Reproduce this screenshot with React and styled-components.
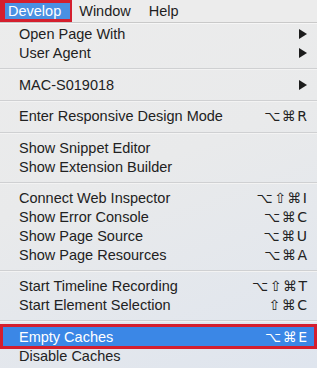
import styled, { createGlobalStyle } from "styled-components";

const Global = createGlobalStyle`
  html, body {
    margin: 0;
    padding: 0;
    background: #e6e7e9;
  }
  body {
    font-family: "Liberation Sans", Arial, sans-serif;
    -webkit-font-smoothing: antialiased;
  }
`;

const Screen = styled.div`
  width: 317px;
  height: 368px;
  overflow: hidden;
  display: flex;
  flex-direction: column;
  background: linear-gradient(160deg, #ececec 0%, #e9eaeb 45%, #dfe5ee 100%);
`;

const MenuBar = styled.div`
  height: 22px;
  display: flex;
  align-items: stretch;
  background: #ececec;
  border-bottom: 1px solid #c9c9c9;
  box-shadow: 0 1px 0 #f6f6f6;
`;

const Title = styled.div`
  display: flex;
  align-items: center;
  font-size: 14.5px;
  color: ${(p) => (p.$active ? "#fff" : "#1e1e1e")};
  padding: ${(p) => (p.$active ? "0 9px 0 3px" : "0 9px 0 9px")};
  background: ${(p) => (p.$active ? "#4a90e2" : "transparent")};
  border: ${(p) => (p.$active ? "3px solid #d41f2e" : "none")};
  border-left-width: ${(p) => (p.$active ? "5px" : "0")};
  border-right-width: ${(p) => (p.$active ? "2px" : "0")};
  margin-right: ${(p) => (p.$active ? "-2px" : "0")};
`;

const Menu = styled.div`
  flex: 1;
  display: flex;
  flex-direction: column;
  padding-top: 2px;
`;

const Row = styled.div`
  height: 18.7px;
  display: flex;
  align-items: center;
  justify-content: space-between;
  padding: 0 10px 0 19px;
  font-size: 14.5px;
  color: #222;

  &[data-active="true"] {
    height: 19px;
    color: #fff;
    background: #3b87e6;
    box-shadow: 0 0 0 3px #d41f2e;
    margin: 0 3px;
    padding: 0 7px 0 16px;
  }
`;

const Keys = styled.span`
  font-family: "DejaVu Sans", "Liberation Sans", sans-serif;
  font-size: 14px;
  letter-spacing: 1.5px;
  margin-right: -1.5px;
`;

const Sep = styled.div`
  height: 13px;
  display: flex;
  align-items: center;
  &::after {
    content: "";
    flex: 1;
    height: 1px;
    background: #cfd0d2;
    box-shadow: 0 1px 0 #f3f3f3;
  }
`;

const Arrow = () => (
  <svg width="8" height="10" viewBox="0 0 8 10">
    <polygon points="0,0 8,5 0,10" fill="#1c1c1c" />
  </svg>
);

const groups = [
  [
    { label: "Open Page With", sub: true },
    { label: "User Agent", sub: true },
  ],
  [{ label: "MAC-S019018", sub: true }],
  [{ label: "Enter Responsive Design Mode", keys: "⌥⌘R" }],
  [{ label: "Show Snippet Editor" }, { label: "Show Extension Builder" }],
  [
    { label: "Connect Web Inspector", keys: "⌥⇧⌘I" },
    { label: "Show Error Console", keys: "⌥⌘C" },
    { label: "Show Page Source", keys: "⌥⌘U" },
    { label: "Show Page Resources", keys: "⌥⌘A" },
  ],
  [
    { label: "Start Timeline Recording", keys: "⌥⇧⌘T" },
    { label: "Start Element Selection", keys: "⇧⌘C" },
  ],
  [
    { label: "Empty Caches", keys: "⌥⌘E", active: true },
    { label: "Disable Caches" },
  ],
];

export default function App() {
  return (
    <Screen>
      <Global />
      <MenuBar>
        <Title $active>Develop</Title>
        <Title>Window</Title>
        <Title>Help</Title>
      </MenuBar>
      <Menu>
        {groups.map((g, i) => (
          <div key={i}>
            {i > 0 && <Sep />}
            {g.map((item) => (
              <Row key={item.label} data-active={item.active ? "true" : "false"}>
                <span>{item.label}</span>
                {item.sub && <Arrow />}
                {item.keys && <Keys>{item.keys}</Keys>}
              </Row>
            ))}
          </div>
        ))}
      </Menu>
    </Screen>
  );
}
